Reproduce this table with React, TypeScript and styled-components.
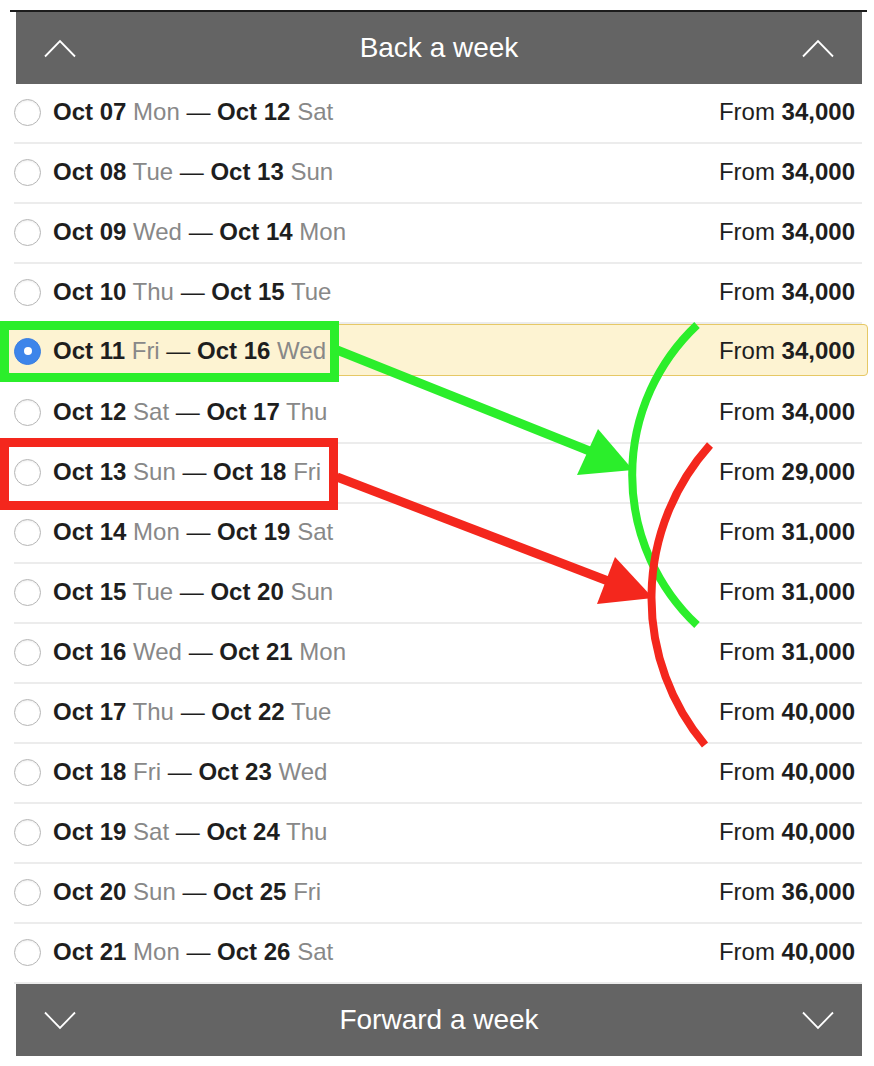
import React from "react";
import styled, { createGlobalStyle } from "styled-components";

const Global = createGlobalStyle`
  html, body { margin: 0; padding: 0; background: #ffffff; }
  body { font-family: "Liberation Sans", Arial, Helvetica, sans-serif; }
`;

const Page = styled.div`
  position: relative;
  width: 874px;
  height: 1066px;
  overflow: hidden;
  background: #fff;
`;

const TopRule = styled.div`
  margin: 10px 7px 0 10px;
  height: 2px;
  background: #1c1c1c;
`;

const Panel = styled.div`
  margin-left: 16px;
  width: 846px;
  display: flex;
  flex-direction: column;
`;

const NavBar = styled.div`
  height: 72px;
  background: #646464;
  display: grid;
  grid-template-columns: 1fr auto 1fr;
  align-items: center;
  padding: 0 28px;
  color: #fff;
  font-size: 28px;
`;

const NavLabel = styled.div`
  text-align: center;
  line-height: 1;
`;

const ChevronBox = styled.div<{ $align: "start" | "end" }>`
  display: flex;
  justify-content: ${(p) => (p.$align === "start" ? "flex-start" : "flex-end")};
  align-items: center;
`;

const List = styled.div`
  display: flex;
  flex-direction: column;
`;

const Row = styled.div<{ $selected?: boolean }>`
  display: flex;
  align-items: center;
  font-size: 24px;
  color: #1e1e1e;
  ${(p) =>
    p.$selected
      ? `
    height: 52px;
    box-sizing: border-box;
    margin: 0 -6px 8px -8px;
    padding: 2px 12px 0 5px;
    background: #fdf3d2;
    border: 1px solid #e6c865;
    border-radius: 4px;
  `
      : `
    height: 60px;
    box-sizing: border-box;
    padding: 1px 7px 3px 0;
    margin-left: -2px;
    border-bottom: 2px solid #ececec;
  `}
`;

const Radio = styled.span<{ $checked?: boolean }>`
  flex: none;
  width: 27px;
  height: 27px;
  box-sizing: border-box;
  border-radius: 50%;
  display: flex;
  align-items: center;
  justify-content: center;
  margin-right: 12px;
  ${(p) =>
    p.$checked
      ? `background: #3d85ea; border: 1px solid #3a7fe0;`
      : `background: #fff; border: 1px solid #b6b6b6; box-shadow: inset 0 1px 2px rgba(0,0,0,0.08);`}
`;

const Dot = styled.span`
  width: 8px;
  height: 8px;
  border-radius: 50%;
  background: #fff;
`;

const Dates = styled.div`
  flex: 1;
  white-space: nowrap;
`;

const Strong = styled.b`
  font-weight: 700;
  color: #1e1e1e;
`;

const Day = styled.span`
  color: #888888;
`;

const Price = styled.div`
  white-space: nowrap;
  color: #1e1e1e;
`;

const Overlay = styled.svg`
  position: absolute;
  left: 0;
  top: 0;
  pointer-events: none;
`;

const days = ["Mon", "Tue", "Wed", "Thu", "Fri", "Sat", "Sun"];
const prices = [
  "34,000", "34,000", "34,000", "34,000", "34,000", "34,000",
  "29,000", "31,000", "31,000", "31,000", "40,000", "40,000",
  "40,000", "36,000", "40,000",
];

const rows = prices.map((price, i) => {
  const start = 7 + i;
  const end = start + 5;
  return {
    start: `Oct ${String(start).padStart(2, "0")}`,
    startDay: days[i % 7],
    end: `Oct ${String(end).padStart(2, "0")}`,
    endDay: days[(i + 5) % 7],
    price,
    selected: start === 11,
  };
});

const Chevron = ({ dir }: { dir: "up" | "down" }) => (
  <svg width="32" height="19" viewBox="0 0 32 19">
    <polyline
      points={dir === "up" ? "1,17.5 16,2 31,17.5" : "1,1.5 16,17 31,1.5"}
      fill="none"
      stroke="#ffffff"
      strokeWidth="1.8"
    />
  </svg>
);

export default function App() {
  return (
    <Page>
      <Global />
      <TopRule />
      <Panel>
        <NavBar>
          <ChevronBox $align="start">
            <Chevron dir="up" />
          </ChevronBox>
          <NavLabel>Back a week</NavLabel>
          <ChevronBox $align="end">
            <Chevron dir="up" />
          </ChevronBox>
        </NavBar>
        <List>
          {rows.map((r) => (
            <Row key={r.start} $selected={r.selected}>
              <Radio $checked={r.selected}>{r.selected && <Dot />}</Radio>
              <Dates>
                <Strong>{r.start}</Strong> <Day>{r.startDay}</Day> —{" "}
                <Strong>{r.end}</Strong> <Day>{r.endDay}</Day>
              </Dates>
              <Price>
                From <Strong>{r.price}</Strong>
              </Price>
            </Row>
          ))}
        </List>
        <NavBar>
          <ChevronBox $align="start">
            <Chevron dir="down" />
          </ChevronBox>
          <NavLabel>Forward a week</NavLabel>
          <ChevronBox $align="end">
            <Chevron dir="down" />
          </ChevronBox>
        </NavBar>
      </Panel>
      <Overlay width="874" height="1066" viewBox="0 0 874 1066">
        {/* green annotation */}
        <rect x="4.5" y="325.5" width="330" height="52" fill="none" stroke="#2bee2b" strokeWidth="9" />
        <line x1="337" y1="350" x2="592" y2="452" stroke="#2bee2b" strokeWidth="9" />
        <polygon points="633,470 598,429 577,475" fill="#2bee2b" />
        <path d="M 697 325 A 206 206 0 0 0 697 625" fill="none" stroke="#2bee2b" strokeWidth="8" />
        {/* red annotation */}
        <rect x="4.5" y="442.5" width="329" height="63" fill="none" stroke="#f4271d" strokeWidth="9" />
        <line x1="337" y1="477" x2="608" y2="581" stroke="#f4271d" strokeWidth="9" />
        <polygon points="653,598 615,557 597,604" fill="#f4271d" />
        <path d="M 710 445 A 229 229 0 0 0 705 745" fill="none" stroke="#f4271d" strokeWidth="8" />
      </Overlay>
    </Page>
  );
}
